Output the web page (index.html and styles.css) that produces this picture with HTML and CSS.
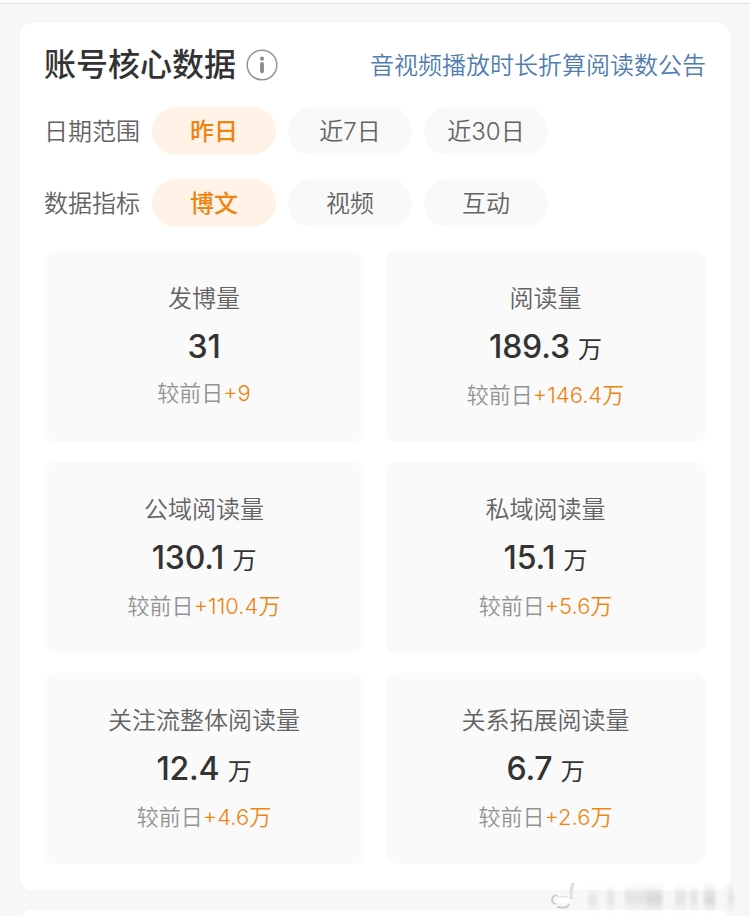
FILE: index.html
```
<!doctype html>
<html lang="zh-CN">

<head>
  <meta charset="utf-8">
  <title>账号核心数据</title>
  <link rel="stylesheet" href="styles.css">
</head>

<body>
  <div class="topbar"></div>

  <section class="card">
    <header class="head">
      <h1>账号核心数据</h1>
      <svg class="info" viewBox="0 0 32 32" width="32" height="32">
        <circle cx="16" cy="16" r="14.8" fill="none" stroke="#929292" stroke-width="1.5"/>
        <circle cx="16" cy="9.7" r="2.1" fill="#8c8c8c"/>
        <path d="M16 14.9V22.3" stroke="#8c8c8c" stroke-width="3.8" stroke-linecap="round"/>
      </svg>
      <a class="notice">音视频播放时长折算阅读数公告</a>
    </header>

    <div class="filter">
      <span class="filter-name">日期范围</span>
      <span class="pill active">昨日</span>
      <span class="pill">近7日</span>
      <span class="pill">近30日</span>
    </div>
    <div class="filter">
      <span class="filter-name">数据指标</span>
      <span class="pill active">博文</span>
      <span class="pill">视频</span>
      <span class="pill">互动</span>
    </div>

    <div class="grid">
      <div class="item plain">
        <h2>发博量</h2>
        <p class="num">31</p>
        <p class="diff">较前日<b>+9</b></p>
      </div>
      <div class="item">
        <h2>阅读量</h2>
        <p class="num">189.3 <small>万</small></p>
        <p class="diff">较前日<b>+146.4万</b></p>
      </div>
      <div class="item">
        <h2>公域阅读量</h2>
        <p class="num">130.1 <small>万</small></p>
        <p class="diff">较前日<b>+110.4万</b></p>
      </div>
      <div class="item">
        <h2>私域阅读量</h2>
        <p class="num">15.1 <small>万</small></p>
        <p class="diff">较前日<b>+5.6万</b></p>
      </div>
      <div class="item">
        <h2>关注流整体阅读量</h2>
        <p class="num">12.4 <small>万</small></p>
        <p class="diff">较前日<b>+4.6万</b></p>
      </div>
      <div class="item">
        <h2>关系拓展阅读量</h2>
        <p class="num">6.7 <small>万</small></p>
        <p class="diff">较前日<b>+2.6万</b></p>
      </div>
    </div>
  </section>

  <section class="card next"></section>

  <!-- faded watermark -->
  <svg class="mark" viewBox="0 0 200 36" width="200" height="36">
    <defs>
      <filter id="soft" x="-10%" y="-50%" width="120%" height="200%"><feGaussianBlur stdDeviation="1.8 4"/></filter>
      <filter id="thin"><feGaussianBlur stdDeviation=".6"/></filter>
    </defs>
    <g fill="#e4e4e4" filter="url(#soft)">
      <path d="M38 14h9v12h-9zM57 11h7v15h-7zM75 10h38v16h-38zM125 10h11v16h-11zM140 10h8v16h-8zM154 8h11v18h-11zM178 10h6v16h-6z"/>
      <path d="M97 14h14v12h-14zM154 16h11v10h-11z" fill="#d6d6d6"/>
    </g>
    <g fill="none" filter="url(#thin)">
      <path d="M6 20h9q5 0 6-6" stroke="#fff" stroke-width="6"/>
      <path d="M23 3q-1 4-2 9v7" stroke="#e0e0e0" stroke-width="3.5"/>
      <path d="M7 15Q2 16 2 20q0 3 4 4" stroke="#c4c4c4" stroke-width="1.6"/>
      <path d="M7 27q5 1 10 0l2-3" stroke="#c4c4c4" stroke-width="1.4"/>
      <path d="M6 17h12" stroke="#ddd"/>
    </g>
  </svg>
</body>

</html>
```
FILE: styles.css
```
* { box-sizing: border-box; }
body {
  margin: 0;
  height: 916px;
  overflow: hidden;
  background: #f7f7f7;
  color: #333;
  font-family: Inter, "Noto Sans CJK SC", sans-serif;
  font-size: 24px;
  font-weight: 350;
}
h1, h2, p { margin: 0; }

.topbar { height: 4px; background: #fcfcfc; border-bottom: 1px solid #dfdfdf; }

.card {
  margin: 19px 20px 0;
  height: 867px;
  padding: 21px 24px 0;
  border-radius: 12px;
  background: #fff;
}
.next { margin-top: 20px; height: 40px; }

.head { display: flex; align-items: center; height: 42px; margin-bottom: 21px; }
.head h1 { font-size: 32px; font-weight: 500; line-height: 42px; }
.info { margin-left: 10px; }
.notice { margin-left: auto; color: #507daf; line-height: 42px; padding-top: 1px; }

.filter { display: flex; gap: 12px; height: 48px; margin-bottom: 24px; line-height: 49px; color: #636363; }
.filter-name { width: 96px; }
.pill {
  width: 124px;
  height: 48px;
  border-radius: 24px;
  background: #f9f9f9;
  text-align: center;
}
.active { background: #fff3e8; color: #ee8412; font-weight: 500; }

.grid { display: grid; grid-template-columns: 320px 321px; grid-auto-rows: 191px; gap: 20px 21px; }
.item { padding-top: 30px; border-radius: 12px; background: #fafafa; text-align: center; }
.item h2 { font-size: 24px; font-weight: 350; line-height: 36px; color: #636363; }
.num { font-size: 32px; font-weight: 500; line-height: 48px; height: 48px; margin-top: 6px; letter-spacing: -.2px; }
.num small { font-size: 24px; font-weight: 400; }
.diff { font-size: 22px; line-height: 33px; margin-top: 8px; color: #939393; }
.plain .diff { margin-top: 6px; }
.diff b { color: #ee8412; font-weight: 350; }

.mark { position: absolute; left: 550px; top: 880px; }
```
